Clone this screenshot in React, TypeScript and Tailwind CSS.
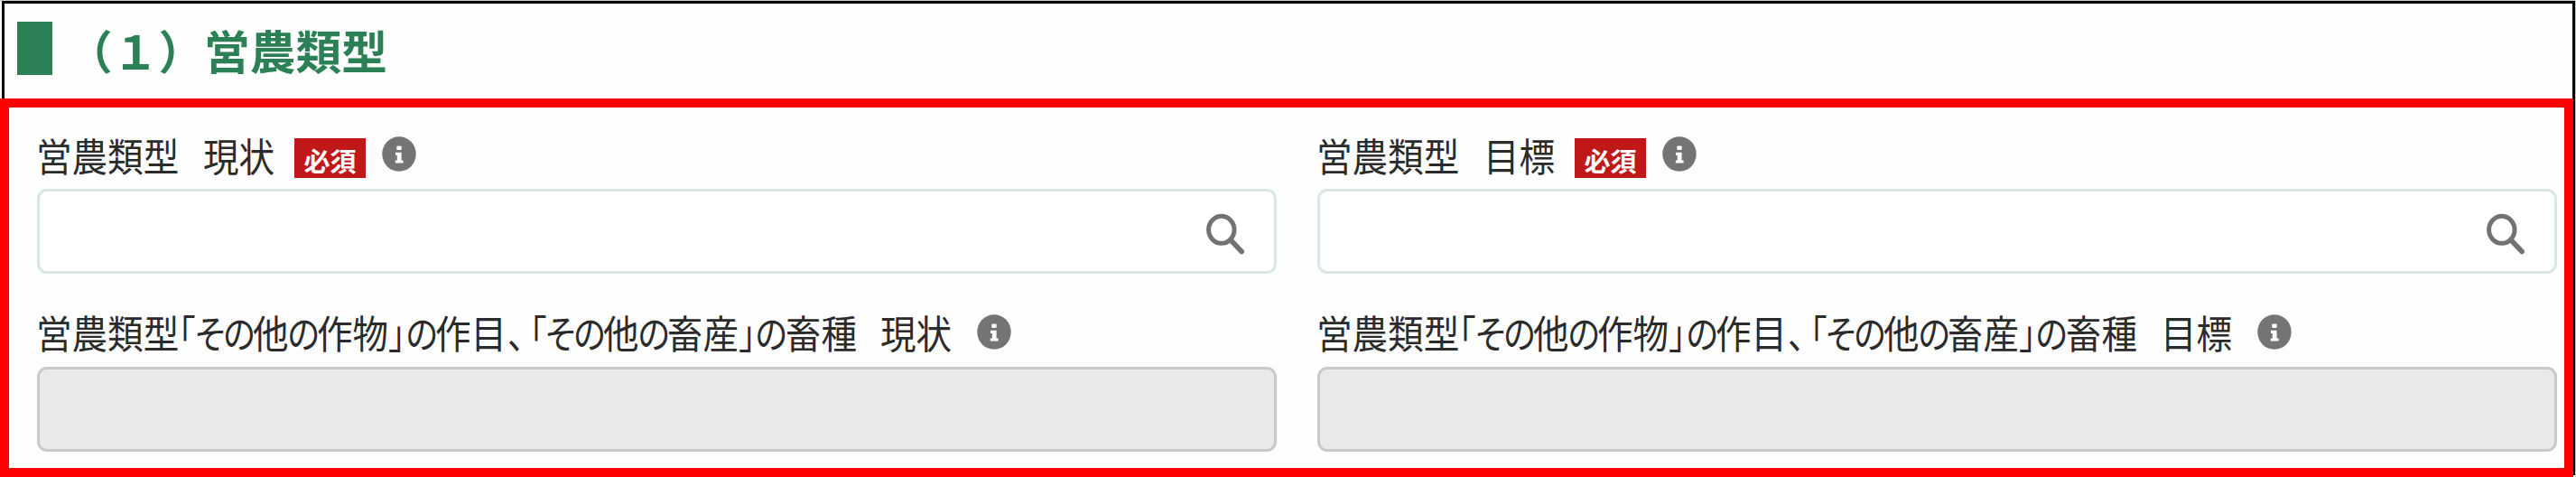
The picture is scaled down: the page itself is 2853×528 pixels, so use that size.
import { ReactNode } from 'react';

const runStyles = {
  kanji: 'scale-x-[0.92]',
  kana: 'scale-x-[0.85] tracking-[-5.5px] -ml-[2px]',
  mark: "scale-x-[0.87] [font-feature-settings:'halt']",
};

type RunProps = {
  kind: keyof typeof runStyles;
  width: string;
  children: ReactNode;
};

const Run = ({ kind, width, children }: RunProps) => (
  <span className={`inline-block shrink-0 ${width}`}>
    <span className={`inline-block origin-left whitespace-nowrap ${runStyles[kind]}`}>{children}</span>
  </span>
);

const InfoIcon = ({ className }: { className: string }) => (
  <svg className={`h-[39px] w-[38px] shrink-0 ${className}`} viewBox="0 0 38 39" aria-hidden="true">
    <ellipse cx="19" cy="19.5" rx="18.7" ry="19.3" fill="#747474" />
    <rect x="16.3" y="10.5" width="5.4" height="4.5" rx="1" fill="#fff" />
    <path d="M15 17.8h6.6v8.6h2v3.2h-8.8v-3.2h2v-5.4H15z" fill="#fff" />
  </svg>
);

const SearchIcon = () => (
  <svg className="mt-[5px] h-[46px] w-[44px]" viewBox="0 0 44 46" fill="none" stroke="#727272" aria-hidden="true">
    <ellipse cx="17.8" cy="18.3" rx="14.2" ry="15" strokeWidth="5" />
    <path d="M27.8 29.5L40.2 42.5" strokeWidth="5.6" strokeLinecap="round" />
  </svg>
);

const TypeField = ({ suffix }: { suffix: string }) => (
  <div>
    <div className="flex h-[90px] items-start pt-[34px]">
      <label className="-mt-[13px] -ml-[1px] flex h-[62px] text-[43px] leading-[62px] text-[#2b2b2b]">
        <Run kind="kanji" width="w-[158px]">営農類型</Run>
        <Run kind="kanji" width="w-[27px]">{'\u3000'}</Run>
        <Run kind="kanji" width="w-[79px]">{suffix}</Run>
      </label>
      <span className="ml-[22px] flex h-[44px] w-[79px] justify-center bg-[#c01818] text-[29px] leading-[48px] font-bold whitespace-nowrap text-white">
        必須
      </span>
      <InfoIcon className="-mt-[2px] ml-[18px]" />
    </div>
    <div className="flex h-[94px] items-center justify-end rounded-[11px] border-[3px] border-[#d8e7e1] bg-white pr-[32px]">
      <SearchIcon />
    </div>
  </div>
);

const OtherField = ({ suffix }: { suffix: string }) => (
  <div>
    <div className="flex h-[103px] items-start pt-[45px]">
      <label className="-mt-[12px] -ml-[1px] flex h-[62px] text-[43px] leading-[62px] text-[#2b2b2b]">
        <Run kind="kanji" width="w-[158px]">営農類型</Run>
        <Run kind="mark" width="w-[19px]">「</Run>
        <Run kind="kana" width="w-[63px]">その</Run>
        <Run kind="kanji" width="w-[39.5px]">他</Run>
        <Run kind="kana" width="w-[31.5px]">の</Run>
        <Run kind="kanji" width="w-[79px]">作物</Run>
        <Run kind="mark" width="w-[20.5px]">」</Run>
        <Run kind="kana" width="w-[31.5px]">の</Run>
        <Run kind="kanji" width="w-[79.5px]">作目</Run>
        <Run kind="mark" width="w-[25px]">、</Run>
        <Run kind="mark" width="w-[18.5px]">「</Run>
        <Run kind="kana" width="w-[63px]">その</Run>
        <Run kind="kanji" width="w-[39.5px]">他</Run>
        <Run kind="kana" width="w-[31.5px]">の</Run>
        <Run kind="kanji" width="w-[79px]">畜産</Run>
        <Run kind="mark" width="w-[19.5px]">」</Run>
        <Run kind="kana" width="w-[32px]">の</Run>
        <Run kind="kanji" width="w-[79px]">畜種</Run>
        <Run kind="kanji" width="w-[26px]">{'\u3000'}</Run>
        <Run kind="kanji" width="w-[79px]">{suffix}</Run>
      </label>
      <InfoIcon className="ml-[28.5px]" />
    </div>
    <div className="h-[94px] rounded-[11px] border-[3px] border-[#c9c9c9] bg-[#e8e9eb]"></div>
  </div>
);

const App = () => {
  return (
    <main className="flex h-[528px] w-[2853px] flex-col overflow-hidden bg-[#fefefe] font-['Noto_Sans_CJK_JP',sans-serif]">
      <header className="h-[109px] border-t border-r border-[#c3cfc9] pl-[2px]">
        <div className="flex h-full items-start border-x-[3px] border-t-[3px] border-black pt-[20px] pl-[14px]">
          <span className="h-[59px] w-[39px] bg-[#2c8055]"></span>
          <h1 className="-mt-[6px] ml-[16px] text-[50.7px] leading-[74px] font-bold whitespace-nowrap text-[#2c8055]">
            （１）営農類型
          </h1>
        </div>
      </header>

      <div className="flex h-[419px] border-r border-[#c3cfc9]">
        <section className="grid w-[2850px] shrink-0 grid-cols-[1373px_1373px] content-start gap-x-[45px] border-[10px] border-[#ff0000] pl-[31px]">
          <TypeField suffix="現状" />
          <TypeField suffix="目標" />
          <OtherField suffix="現状" />
          <OtherField suffix="目標" />
        </section>
        <div className="h-[417px] w-[2px] bg-black"></div>
      </div>
    </main>
  );
};

export default App;
